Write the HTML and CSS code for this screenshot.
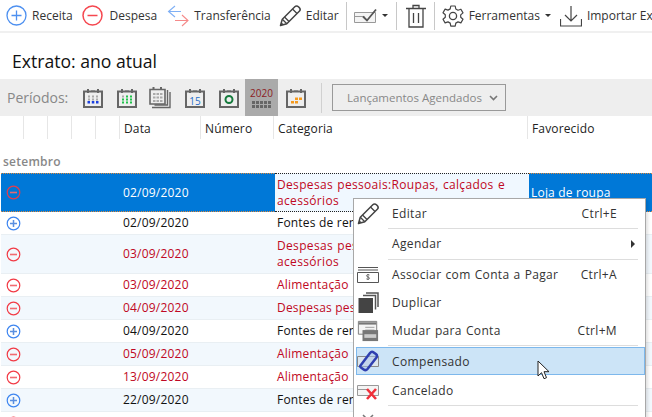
FILE: index.html
```html
<!DOCTYPE html>
<html lang="pt">
<head>
<meta charset="utf-8">
<title>Extrato</title>
<link rel="stylesheet" href="styles.css">
</head>
<body>
<svg class="defs" width="0" height="0" aria-hidden="true">
  <defs>
    <symbol id="cal" viewBox="0 0 20 20">
      <path d="M1 3.500H19V19H1Z" fill="none" stroke="#666" stroke-width="2"/>
      <path d="M4 1h2v4H4zM14 1h2v4h-2zM8 2.500h4v1H8z" fill="#666"/>
    </symbol>
    <symbol id="pencil" viewBox="0 0 22 22">
      <path d="M1.500 20.500l1.800-6.300L15.800 1.700c1-1 2.600-1 3.600 0l.9.900c1 1 1 2.600 0 3.600L7.800 18.700z" fill="#fff" stroke="#444" stroke-width="1.500" stroke-linejoin="round"/>
      <path d="M3.300 14.200l4.500 4.500M5.500 12l4.500 4.500M13.500 4l4.500 4.500" fill="none" stroke="#444" stroke-width="1.300"/>
      <path d="M1.500 20.500l.9-3.300 2.400 2.400z" fill="#444"/>
    </symbol>
    <symbol id="plus" viewBox="0 0 15 15">
      <circle cx="7.500" cy="7.500" r="6.300" fill="none" stroke="#3d85f0" stroke-width="1.200"/>
      <path d="M4 7.500h7M7.500 4v7" stroke="#5a8fe0" stroke-width="1.500"/>
    </symbol>
    <symbol id="minus" viewBox="0 0 15 15">
      <circle cx="7.500" cy="7.500" r="6.300" fill="none" stroke="#f23a45" stroke-width="1.200"/>
      <path d="M4 7.500h7" stroke="#f26a70" stroke-width="1.600"/>
    </symbol>
  </defs>
</svg>

<header class="toolbar">
  <button class="tool tool-receita">
    <svg class="ico21" viewBox="0 0 21 21"><circle cx="10.500" cy="10.500" r="9.500" fill="none" stroke="#4d90f0" stroke-width="1.300"/><path d="M5.500 10.500h10M10.500 5.500v10" stroke="#4d90f0" stroke-width="1.300"/></svg>
    <span>Receita</span>
  </button>
  <button class="tool tool-despesa">
    <svg class="ico21" viewBox="0 0 21 21"><circle cx="10.500" cy="10.500" r="9.500" fill="none" stroke="#f5474f" stroke-width="1.500"/><path d="M5.500 10.500h10" stroke="#f5474f" stroke-width="1.500"/></svg>
    <span>Despesa</span>
  </button>
  <button class="tool tool-transf">
    <svg class="ico22" viewBox="0 0 22 22"><path d="M8 1L1.500 6.500 8 12M1.500 6.500H14" fill="none" stroke="#7fb0f5" stroke-width="1.100"/><path d="M15 10l6 5.500-6 5.500M21 15.500H8" fill="none" stroke="#f58a8a" stroke-width="1.100"/></svg>
    <span>Transferência</span>
  </button>
  <button class="tool tool-edit">
    <svg class="ico22"><use href="#pencil"/></svg>
    <span>Editar</span>
  </button>
  <i class="vsep vsep-a"></i>
  <button class="tool tool-check">
    <svg class="ico-check" viewBox="0 0 23 16"><path d="M.500 4.500h21v10H.500z" fill="#f4f4f4" stroke="#999"/><path d="M.500 8.500h10" stroke="#999"/><path d="M9 8.500l4 4L22 1.500" fill="none" stroke="#555" stroke-width="1.800"/></svg>
    <i class="caret"></i>
  </button>
  <i class="vsep vsep-b"></i>
  <button class="tool tool-trash">
    <svg class="ico-trash" viewBox="0 0 20 24"><path d="M0 4.500h20M7 4V1.500h6V4M3 5v18h14V5M7.500 9v10M12.500 9v10" fill="none" stroke="#444" stroke-width="1.300"/></svg>
  </button>
  <i class="vsep vsep-c"></i>
  <button class="tool tool-gear">
    <svg class="ico-gear" viewBox="0 0 22 22"><path d="M8.800 1h4.400l.6 3 2.200 1.200 2.900-1 2.100 3.700-2.300 2 0 2.300 2.300 2-2.100 3.700-2.900-1-2.200 1.200-.6 3H8.800l-.6-3L6 16.900l-2.900 1L1 14.200l2.300-2v-2.400L1 7.800l2.100-3.700 2.900 1 2.200-1.200z" fill="none" stroke="#444" stroke-width="1.200" stroke-linejoin="round"/><circle cx="11" cy="11" r="3.600" fill="none" stroke="#444" stroke-width="1.300"/></svg>
    <span>Ferramentas</span>
    <i class="caret caret-tight"></i>
  </button>
  <button class="tool tool-import">
    <svg class="ico22" viewBox="0 0 22 22"><path d="M11 1v15M5 10l6 6 6-6" fill="none" stroke="#444" stroke-width="1.200"/><path d="M.500 14v7h21v-7" fill="none" stroke="#444" stroke-width="1.200"/></svg>
    <span>Importar Extrato</span>
  </button>
</header>

<h1 class="title">Extrato: ano atual</h1>

<section class="periods">
  <span class="periods-label">Períodos:</span>
  <svg class="cal cal-1" viewBox="0 0 20 20"><use href="#cal"/><path d="M5 7.500h2v2H5zM9 7.500h2v2H9zM13 7.500h2v2h-2zM5 10.500h2v2H5z" fill="#aaa"/><path d="M9 10.500h2v2H9zM13 10.500h2v2h-2z" fill="#aaa"/><path d="M4.500 13h2.500v2.500H4.500zM8.800 13h2.500v2.500H8.800zM13 13h2.500v2.500H13z" fill="#1a3fe0"/></svg>
  <svg class="cal cal-2" viewBox="0 0 20 20"><use href="#cal"/><path d="M5 7.500h2v2H5z" fill="#aaa"/><path d="M9 7.500h2v2H9zM13 7.500h2v2h-2zM5 10.500h2v2H5zM9 10.500h2v2H9zM13 10.500h2v2h-2zM5 13.500h2v2H5zM9 13.500h2v2H9zM13 13.500h2v2h-2z" fill="#1fc24a"/></svg>
  <svg class="cal cal-3" viewBox="0 0 22 22"><path d="M3 20.500h18V5" fill="none" stroke="#666" stroke-width="1.400"/><path d="M5.500 18h13V3" fill="none" stroke="#666" stroke-width="1.400"/><path d="M1 2.500h15V17H1Z" fill="#eee" stroke="#666" stroke-width="1.600"/><path d="M4 6h2.500v2H4zM7.500 6H10v2H7.500zM11 6h2.500v2H11zM4 9.500h2.500v2H4zM7.500 9.500H10v2H7.500zM11 9.500h2.500v2H11zM4 13h2.500v2H4zM7.500 13H10v2H7.500zM11 13h2.500v2H11z" fill="#aaa"/><path d="M3.500 0h2v3h-2zM11 0h2v3h-2z" fill="#666"/></svg>
  <svg class="cal cal-4" viewBox="0 0 20 20"><use href="#cal"/><text x="10" y="16.500" class="cal-num">15</text></svg>
  <svg class="cal cal-5" viewBox="0 0 20 20"><use href="#cal"/><circle cx="10" cy="11.500" r="3.500" fill="none" stroke="#157a3c" stroke-width="2"/></svg>
  <div class="year-btn">
    <span class="year-text">2020</span>
    <svg class="year-grid" viewBox="0 0 20 7"><path d="M0 0h3v3H0zM4 0h3v3H4zM8 0h3v3H8zM12 0h3v3h-3zM16 0h3v3h-3zM0 4h3v3H0zM4 4h3v3H4zM8 4h3v3H8zM12 4h3v3h-3zM16 4h3v3h-3z" fill="#666"/></svg>
  </div>
  <svg class="cal cal-7" viewBox="0 0 20 20"><use href="#cal"/><path d="M9 9.500h3v2.500H9zM13 9.500h3v2.500h-3zM5 13h3v2.500H5zM9 13h3v2.500H9z" fill="#f59a1e"/></svg>
  <i class="psep"></i>
  <div class="sched">
    <span>Lançamentos Agendados</span>
    <svg class="chev" viewBox="0 0 9 6"><path d="M1 1l3.500 3.500L8 1" fill="none" stroke="#777" stroke-width="1.600"/></svg>
  </div>
</section>

<section class="grid">
  <div class="row head">
    <div class="c"></div><div class="c"></div><div class="c"></div><div class="c"></div><div class="c"></div>
    <div class="c">Data</div><div class="c">Número</div><div class="c">Categoria</div><div class="c last">Favorecido</div>
  </div>
  <div class="group">setembro</div>

  <div class="row sel tall">
    <div class="c c-ico"><svg class="st"><use href="#minus"/></svg></div><div class="c"></div><div class="c"></div><div class="c"></div><div class="c"></div>
    <div class="c">02/09/2020</div><div class="c"></div>
    <div class="c cat red">Despesas pessoais:Roupas, calçados e acessórios</div>
    <div class="c last">Loja de roupa</div>
  </div>
  <div class="row">
    <div class="c c-ico"><svg class="st"><use href="#plus"/></svg></div><div class="c"></div><div class="c"></div><div class="c"></div><div class="c"></div>
    <div class="c">02/09/2020</div><div class="c"></div><div class="c">Fontes de renda</div><div class="c last"></div>
  </div>
  <div class="row alt tall">
    <div class="c c-ico"><svg class="st"><use href="#minus"/></svg></div><div class="c"></div><div class="c"></div><div class="c"></div><div class="c"></div>
    <div class="c red">03/09/2020</div><div class="c"></div><div class="c cat red">Despesas pessoais:Roupas, calçados e acessórios</div><div class="c last"></div>
  </div>
  <div class="row">
    <div class="c c-ico"><svg class="st"><use href="#minus"/></svg></div><div class="c"></div><div class="c"></div><div class="c"></div><div class="c"></div>
    <div class="c red">03/09/2020</div><div class="c"></div><div class="c red">Alimentação</div><div class="c last"></div>
  </div>
  <div class="row alt">
    <div class="c c-ico"><svg class="st"><use href="#minus"/></svg></div><div class="c"></div><div class="c"></div><div class="c"></div><div class="c"></div>
    <div class="c red">04/09/2020</div><div class="c"></div><div class="c red">Despesas pessoais</div><div class="c last"></div>
  </div>
  <div class="row">
    <div class="c c-ico"><svg class="st"><use href="#plus"/></svg></div><div class="c"></div><div class="c"></div><div class="c"></div><div class="c"></div>
    <div class="c">04/09/2020</div><div class="c"></div><div class="c">Fontes de renda</div><div class="c last"></div>
  </div>
  <div class="row alt">
    <div class="c c-ico"><svg class="st"><use href="#minus"/></svg></div><div class="c"></div><div class="c"></div><div class="c"></div><div class="c"></div>
    <div class="c red">05/09/2020</div><div class="c"></div><div class="c red">Alimentação</div><div class="c last"></div>
  </div>
  <div class="row">
    <div class="c c-ico"><svg class="st"><use href="#minus"/></svg></div><div class="c"></div><div class="c"></div><div class="c"></div><div class="c"></div>
    <div class="c red">13/09/2020</div><div class="c"></div><div class="c red">Alimentação</div><div class="c last"></div>
  </div>
  <div class="row alt">
    <div class="c c-ico"><svg class="st"><use href="#plus"/></svg></div><div class="c"></div><div class="c"></div><div class="c"></div><div class="c"></div>
    <div class="c">22/09/2020</div><div class="c"></div><div class="c">Fontes de renda</div><div class="c last"></div>
  </div>
  <div class="row">
    <div class="c c-ico"><svg class="st"><use href="#minus"/></svg></div>
  </div>
</section>

<nav class="menu">
  <div class="mi h29">
    <svg class="mi-ico"><use href="#pencil"/></svg>
    <span class="mi-label">Editar</span><span class="mi-key">Ctrl+E</span>
  </div>
  <hr class="msep">
  <div class="mi h30">
    <span class="mi-ico"></span>
    <span class="mi-label">Agendar</span><i class="arrow"></i>
  </div>
  <hr class="msep">
  <div class="mi h29">
    <svg class="mi-ico" viewBox="0 0 22 22"><path d="M1 3.500h20M1 6h20" stroke="#555"/><path d="M.500 8.500h21v10H.500z" fill="#fff" stroke="#555"/><path d="M12.500 11c-.6-.7-3-.7-3 .8 0 1.600 3 .8 3 2.400 0 1.500-2.500 1.300-3.200.6M11 10v6" fill="none" stroke="#555" stroke-width=".8"/></svg>
    <span class="mi-label">Associar com Conta a Pagar</span><span class="mi-key">Ctrl+A</span>
  </div>
  <div class="mi h28">
    <svg class="mi-ico" viewBox="0 0 22 22"><path d="M9 1h12v14M6 3.500h12.500v14" fill="none" stroke="#555" stroke-width="1.500"/><path d="M1.500 6H16v15H1.500z" fill="#444"/></svg>
    <span class="mi-label">Duplicar</span>
  </div>
  <div class="mi h28">
    <svg class="mi-ico" viewBox="0 0 22 24"><path d="M.500 1.500h20v14H.500z" fill="#f4f4f4" stroke="#777"/><path d="M1 2.500h19v2.500H1z" fill="#777"/><path d="M8 8h10M8 11h10" stroke="#999"/><path d="M5 11h17v12H5z" fill="#777"/><path d="M7 15.500h13v4H7z" fill="#ccc"/></svg>
    <span class="mi-label">Mudar para Conta</span><span class="mi-key">Ctrl+M</span>
  </div>
  <hr class="msep">
  <div class="mi hover">
    <svg class="mi-ico" viewBox="0 0 22 22"><path d="M.500 6.500h21v10H.500z" fill="#dce6ee" stroke="#888"/><path d="M3.500 15.500L13 3c1-1.300 2.500-1.500 3.700-.6l2.200 1.700c1.200.9 1.300 2.500.4 3.700L10.500 19c-1 1.200-2.600 1.400-3.800.5l-2.500-1.800c-1-.7-1.400-1.200-.7-2.200z" fill="#a9c2ea" fill-opacity=".5" stroke="#2f3fb0" stroke-width="2.500"/></svg>
    <span class="mi-label">Compensado</span>
  </div>
  <div class="mi h29">
    <svg class="mi-ico" viewBox="0 0 22 22"><path d="M.500 5.500h21v10H.500z" fill="#f4f4f4" stroke="#999"/><path d="M.500 9.500h10" stroke="#999"/><path d="M10 9l9 10M19 9l-9 10" stroke="#f0303a" stroke-width="2.600"/></svg>
    <span class="mi-label">Cancelado</span>
  </div>
  <hr class="msep">
  <div class="mi h29">
    <svg class="mi-ico" viewBox="0 0 22 22"><path d="M6 5l5 5 5-5M6 15l5-5 5 5" fill="none" stroke="#777" stroke-width="1.500"/></svg>
    <span class="mi-label"></span>
  </div>
</nav>

<svg class="cursor" viewBox="0 0 14 20"><path d="M1 1v15l3.500-3.300 2.500 6 2.500-1-2.500-6H12z" fill="#fff" stroke="#222" stroke-width="1"/></svg>
</body>
</html>
```

FILE: styles.css
```css
* { box-sizing: border-box; }
html, body { margin: 0; height: 100%; }
body {
  width: 652px;
  height: 417px;
  position: relative;
  overflow: hidden;
  background: #fff;
  color: #333;
  font: 12px/16px "Open Sans", "Noto Sans", sans-serif;
}
.defs { position: absolute; }

/* toolbar */
.toolbar {
  height: 33px;
  border-bottom: 2px solid #f0f0f0;
  display: flex;
  align-items: center;
  white-space: nowrap;
  padding-left: 6px;
}
.tool {
  display: flex;
  align-items: center;
  flex: none;
  height: 31px;
  padding: 0;
  border: 0;
  background: none;
  font: inherit;
  color: #333;
}
.ico21 { width: 21px; height: 21px; flex: none; margin-right: 5px; }
.ico22 { width: 22px; height: 22px; flex: none; margin-right: 5px; }
.tool-despesa { margin-left: 9px; }
.tool-despesa .ico21 { margin-right: 7px; }
.tool-transf { margin-left: 10px; }
.tool-edit { margin-left: 8px; }
.vsep { flex: none; width: 1px; height: 28px; background: #c8c8c8; }
.vsep-a { margin-left: 7px; }
.tool-check { margin-left: 7px; }
.ico-check { width: 23px; height: 16px; }
.caret { flex: none; width: 0; height: 0; margin-left: 5px; border: 3px solid transparent; border-top: 3px solid #333; border-bottom: 0; }
.caret-tight { margin-left: 5px; }
.vsep-b { margin-left: 8px; }
.tool-trash { margin-left: 9px; }
.ico-trash { width: 20px; height: 24px; }
.vsep-c { margin-left: 8px; }
.tool-gear { margin-left: 7px; }
.ico-gear { width: 22px; height: 22px; margin-right: 5px; }
.tool-import { margin-left: 9px; }

/* title */
.title {
  margin: 0;
  height: 46px;
  padding: 16px 0 0 12px;
  font-size: 17.600px;
  line-height: 24px;
  font-weight: 400;
  color: #111;
}

/* periods bar */
.periods {
  height: 37px;
  background: #eee;
  display: flex;
  align-items: center;
  padding-left: 7px;
}
.periods-label { font-size: 14px; color: #888; width: 76px; flex: none; }
.cal { flex: none; width: 20px; height: 20px; }
.cal-2 { margin-left: 14px; }
.cal-3 { margin-left: 12px; width: 22px; height: 22px; }
.cal-4 { margin-left: 14px; }
.cal-5 { margin-left: 14px; }
.cal-num { font: 10px "Open Sans", sans-serif; fill: #1f6fc8; text-anchor: middle; }
.year-btn {
  flex: none;
  margin-left: 6px;
  width: 33px;
  height: 37px;
  background: #aaa;
  display: flex;
  flex-direction: column;
  align-items: center;
  justify-content: center;
}
.year-text { font-size: 10px; line-height: 12px; color: #8c1c24; }
.year-grid { width: 20px; height: 7px; margin-top: 2px; }
.cal-7 { margin-left: 8px; }
.psep { flex: none; width: 1px; height: 30px; margin-left: 15px; background: #d0d0d0; }
.sched {
  flex: none;
  width: 174px;
  height: 27px;
  margin-left: 10px;
  border: 1px solid #999;
  display: flex;
  align-items: center;
  justify-content: space-between;
  padding: 0 7px 0 14px;
  font-size: 11.500px;
  color: #888;
}
.chev { width: 9px; height: 6px; }

/* grid */
.row {
  display: grid;
  grid-template-columns: 24px 24px 24px 24px 24px 81px 73px 254px 124px;
  height: 23px;
  align-items: center;
  color: #111;
  border-bottom: 1px solid #e9eff3;
  margin-left: 1px;
  width: 651px;
  letter-spacing: .2px;
}
.row.tall { height: 39px; }
.row.alt { background: #f2f8fd; }
.c { padding-left: 2px; line-height: 16px; min-width: 0; white-space: nowrap; overflow: hidden; }
.c:nth-child(6) { padding-left: 2px; }
.c-ico { padding-left: 5px; display: flex; align-items: center; overflow: visible; }
.cat { white-space: normal; padding-right: 10px; letter-spacing: .33px; word-spacing: .8px; }
.red { color: #c00824; }
.st { width: 15px; height: 15px; }
.head { height: 23px; border: 0; margin-left: 0; width: 652px; align-items: stretch; letter-spacing: .15px; }
.head .c { border-right: 1px solid #e6e6e6; line-height: 25px; padding-left: 4px; color: #222; }
.head .c:nth-child(6) { padding-left: 4px; }
.head .last { border: 0; }
.group { height: 34px; padding: 15px 0 0 3px; font-weight: 600; color: #888; letter-spacing: .25px; }
.sel { background: #0078d7; color: #fff; height: 38px; border: 1px dotted #e08a3c; border-width: 1px 0; }
.sel .cat { background: #f0f8ff; align-self: stretch; display: flex; align-items: center; border-top: 1px dotted #222; border-bottom: 1px dotted #222; margin: -1px 0; }
.sel .st { opacity: .95; }

/* context menu */
.menu {
  position: absolute;
  left: 353px;
  top: 198px;
  width: 293px;
  background: #fff;
  border: 1px solid #a8a8a8;
  box-shadow: 2px 2px 3px rgba(0,0,0,.12);
  padding-left: 1px;
  color: #333;
  letter-spacing: .35px;
  word-spacing: .6px;
}
.mi { display: flex; align-items: center; height: 29px; padding-right: 28px; }
.h28 { height: 28px; }
.h29 { height: 29px; }
.h30 { height: 30px; }
.mi-ico { flex: none; width: 22px; height: 22px; margin: 0 13px 0 2px; display: block; }
.mi-label { flex: 1; }
.arrow { position: absolute; right: 10px; width: 0; height: 0; border: 4px solid transparent; border-left: 4px solid #333; border-right: 0; }
.msep { margin: 0 7px 0 33px; height: 1px; border: 0; background: #ddd; }
.hover { height: 28px; margin: 1px 0 0 1px; background: #cce4f7; border: 1px solid #7db8ec; padding-right: 27px; padding-top: 2px; }
.hover .mi-ico { margin: -2px 13px 0 0; }
.hover + .mi { margin-top: 1px; }
.cursor { position: absolute; left: 537px; top: 360px; width: 14px; height: 20px; }
```
